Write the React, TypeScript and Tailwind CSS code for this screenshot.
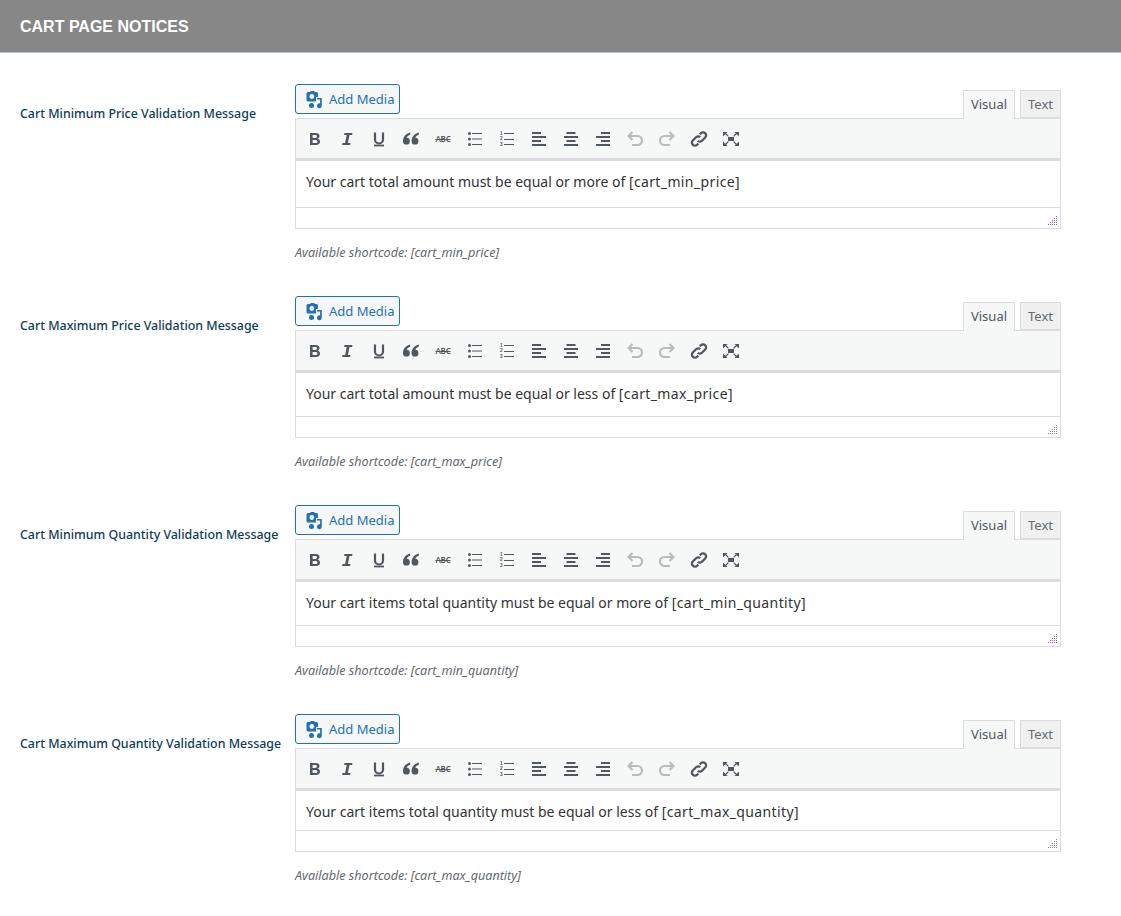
import type { ReactNode } from "react";

const rows = [
  { label: "Cart Minimum Price Validation Message", text: "Your cart total amount must be equal or more of ", tag: "[cart_min_price]", body: "h-[47px]", wrap: "mb-[33px]", pink: true },
  { label: "Cart Maximum Price Validation Message", text: "Your cart total amount must be equal or less of ", tag: "[cart_max_price]", body: "h-[44px]", wrap: "mb-[33px]", pink: false },
  { label: "Cart Minimum Quantity Validation Message", text: "Your cart items total quantity must be equal or more of ", tag: "[cart_min_quantity]", body: "h-[44px]", wrap: "mb-[33px]", pink: true },
  { label: "Cart Maximum Quantity Validation Message", text: "Your cart items total quantity must be equal or less of ", tag: "[cart_max_quantity]", body: "h-[40px]", wrap: "mb-[10px]", pink: false },
];

function BoldIcon() {
  return (
    <svg width="16" height="16" viewBox="0 0 16 16" fill="#50575e" fillRule="evenodd">
      <path d="M3 2h5.700c2.400 0 3.800 1.200 3.800 3.100 0 1.300-.7 2.200-1.900 2.600 1.500.3 2.400 1.400 2.400 2.900 0 2.100-1.500 3.400-4 3.400H3zM5.600 4v2.900h2.700c1 0 1.600-.5 1.600-1.450S9.300 4 8.300 4zM5.600 8.900V12h3.100c1.100 0 1.700-.6 1.700-1.550s-.6-1.550-1.700-1.550z" />
    </svg>
  );
}

function ItalicIcon() {
  return (
    <svg width="16" height="16" viewBox="0 0 16 16" fill="#50575e">
      <path d="M5.500 2h8l-.4 2h-2.600l-1.600 8h2.600l-.4 2h-8l.4-2h2.600l1.600-8H5.100z" />
    </svg>
  );
}

function UnderlineIcon() {
  return (
    <svg width="16" height="16" viewBox="0 0 16 16" fill="none" stroke="#50575e">
      <path d="M4 1.500v7a4 4 0 0 0 8 0v-7" strokeWidth="2.200" />
      <path d="M3 14.500h10" strokeWidth="1.800" />
    </svg>
  );
}

function Lines({ kind }: { kind: "left" | "center" | "right" }) {
  const x = (w: number) => (kind === "left" ? 1 : kind === "right" ? 15 - w : 8 - w / 2);
  return (
    <svg width="16" height="16" viewBox="0 0 16 16" fill="#50575e">
      <rect x={x(9)} y="1" width="9" height="2" />
      <rect x={x(14)} y="5" width="14" height="2" />
      <rect x={x(9)} y="9" width="9" height="2" />
      <rect x={x(14)} y="13" width="14" height="2" />
    </svg>
  );
}

function BulletList() {
  return (
    <svg width="16" height="16" viewBox="0 0 16 16" fill="#50575e">
      <circle cx="2.500" cy="2.500" r="1.500" />
      <circle cx="2.500" cy="8" r="1.500" />
      <circle cx="2.500" cy="13.500" r="1.500" />
      <rect x="5" y="2" width="10" height="1" />
      <rect x="5" y="7.500" width="10" height="1" />
      <rect x="5" y="13" width="10" height="1" />
    </svg>
  );
}

function NumberList() {
  return (
    <div className="relative h-4 w-4 text-[#50575e]">
      <span className="absolute left-px top-0 font-['Liberation_Sans',sans-serif] text-[4.700px] font-bold leading-[5.500px]">
        1<br />2<br />3
      </span>
      <div className="absolute left-[5px] top-[2px] h-px w-[10px] bg-[#50575e]" />
      <div className="absolute left-[5px] top-[8px] h-px w-[10px] bg-[#50575e]" />
      <div className="absolute left-[5px] top-[13px] h-px w-[10px] bg-[#50575e]" />
    </div>
  );
}

function Quote() {
  return (
    <svg width="16" height="16" viewBox="0 0 16 16" fill="#50575e">
      <path d="M7.200 1.500C3 2.500 0 5.800 0 10.200a3.400 3.400 0 1 0 3.700-3.400C4 5.500 5.500 4.300 7.200 3.800z" />
      <path d="M15.800 1.500c-4.200 1-7.200 4.300-7.200 8.700a3.400 3.400 0 1 0 3.700-3.400c.3-1.300 1.800-2.500 3.500-3z" />
    </svg>
  );
}

function LinkIcon() {
  return (
    <svg width="18" height="18" viewBox="0 0 18 18" fill="none" stroke="#50575e" strokeWidth="2.300">
      <path d="M7.800 10.700a3 3 0 0 0 4.400-.2l3-3a3 3 0 0 0-4.300-4.300L9.700 4.400" />
      <path d="M10.200 7.300a3 3 0 0 0-4.400.2l-3 3a3 3 0 0 0 4.300 4.300l1.200-1.200" />
    </svg>
  );
}

function Arrow({ flip }: { flip?: boolean }) {
  return (
    <svg width="16" height="16" viewBox="0 0 16 16" fill="none" stroke="#b9bbbd" strokeWidth="2.200" className={flip ? "-scale-x-100" : ""}>
      <path d="M1.500 5H10.500a4.500 4.500 0 0 1 0 9H5" />
      <path d="M5.500 1L1.500 5L5.500 9" />
    </svg>
  );
}

function Fullscreen() {
  return (
    <svg width="16" height="16" viewBox="0 0 16 16" fill="#50575e">
      <rect x="5" y="6" width="6" height="4" />
      <path d="M0 1h4.500L3.200 2.300 5.800 5 5 5.800 2.300 3.200 0 5.500z" />
      <path d="M16 1h-4.500l1.300 1.300L10.200 5l.8.8 2.700-2.600L16 5.500z" />
      <path d="M0 15h4.500l-1.300-1.300L5.800 11 5 10.200 2.300 12.800 0 10.500z" />
      <path d="M16 15h-4.500l1.300-1.300L10.200 11l.8-.8 2.700 2.600L16 10.500z" />
    </svg>
  );
}

function MediaIcon() {
  return (
    <svg width="18" height="18" viewBox="0 0 18 18" fill="#2271b1">
      <path d="M3 1h2l1-1h3l1 1h1.500A1.500 1.500 0 0 1 13 2.500V6h-2v3.500a2 2 0 0 0 .2 1H3A1.500 1.500 0 0 1 1.500 9V2.500A1.500 1.500 0 0 1 3 1z" />
      <circle cx="6.800" cy="5.500" r="2.400" fill="#f6f7f7" />
      <path d="M12 7h4.800v7.800a2.400 2.400 0 1 1-1.700-2.300V8.600H12z" />
      <circle cx="6.500" cy="14.500" r="2.500" />
    </svg>
  );
}

const tools: ReactNode[] = [
  <BoldIcon />,
  <ItalicIcon />,
  <UnderlineIcon />,
  <Quote />,
  <span className="text-[8px] font-semibold leading-none tracking-tight text-[#50575e] line-through">ABC</span>,
  <BulletList />,
  <NumberList />,
  <Lines kind="left" />,
  <Lines kind="center" />,
  <Lines kind="right" />,
  <Arrow />,
  <Arrow flip />,
  <LinkIcon />,
  <Fullscreen />,
];

function Toolbar() {
  return (
    <div className="flex h-[42px] items-center border-b-[3px] border-[#dcdcde] bg-[#f6f7f7] pl-[3px]">
      {tools.map((icon, i) => (
        <div key={i} className="flex w-8 items-center justify-center">
          {icon}
        </div>
      ))}
    </div>
  );
}

function Grip({ pink }: { pink: boolean }) {
  const dots = [[8, 0], [8, 2], [6, 2], [8, 4], [6, 4], [4, 4], [8, 6], [6, 6], [4, 6], [2, 6], [8, 8], [6, 8], [4, 8], [2, 8], [0, 8]];
  return (
    <svg width="10" height="10" viewBox="0 0 10 10" fill={pink ? "#a35bb0" : "#8c8f94"} className="absolute bottom-[2px] right-[2px]">
      {dots.map(([x, y]) => (
        <rect key={`${x}-${y}`} x={x} y={y} width="1" height="1" />
      ))}
    </svg>
  );
}

export default function App() {
  return (
    <div className="min-h-[916px] bg-white font-['Noto_Sans',sans-serif]">
      <div className="flex h-[53px] items-center border-b border-[#a9cbd8] bg-[#878787] pl-5 pt-px font-['Liberation_Sans',sans-serif] text-base font-bold text-white">
        CART PAGE NOTICES
      </div>
      <div className="pt-[31px] pl-5">
        {rows.map((r) => (
          <div key={r.label} className={`flex ${r.wrap}`}>
            <div className="w-[275px] shrink-0 pt-[20px] text-[12.400px] font-medium leading-[20px] text-[#0f3d57]">{r.label}</div>
            <div className="w-[766px]">
              <div className="flex items-end justify-between">
                <button className="mb-1 flex h-[30px] w-[105px] items-center gap-[6px] rounded-[3px] border border-[#2271b1] bg-[#f6f7f7] pl-[9px] pt-px text-[13px] text-[#2271b1]">
                  <MediaIcon />
                  Add Media
                </button>
                <div className="flex items-end">
                  <div className="relative top-px h-[29px] w-[52px] border border-b-0 border-[#dcdcde] bg-[#f6f7f7] text-center text-[13px] leading-[27px] text-[#50575e]">Visual</div>
                  <div className="ml-[5px] h-[28px] w-[41px] border border-[#dcdcde] bg-[#f0f0f1] text-center text-[13px] leading-[27px] text-[#646970]">Text</div>
                </div>
              </div>
              <div className="border border-[#dcdcde]">
                <Toolbar />
                <div className={`${r.body} whitespace-pre border-b border-[#dcdcde] pl-[10px] pt-[10px] text-sm leading-[22px] text-[#333]`}>
                  {r.text}
                  <span className="tracking-[0.38px]">{r.tag}</span>
                </div>
                <div className="relative h-[20px]">
                  <Grip pink={r.pink} />
                </div>
              </div>
              <p className="mt-[14px] text-[12.600px] italic leading-[20px] text-[#646970]">Available shortcode: {r.tag}</p>
            </div>
          </div>
        ))}
      </div>
    </div>
  );
}
